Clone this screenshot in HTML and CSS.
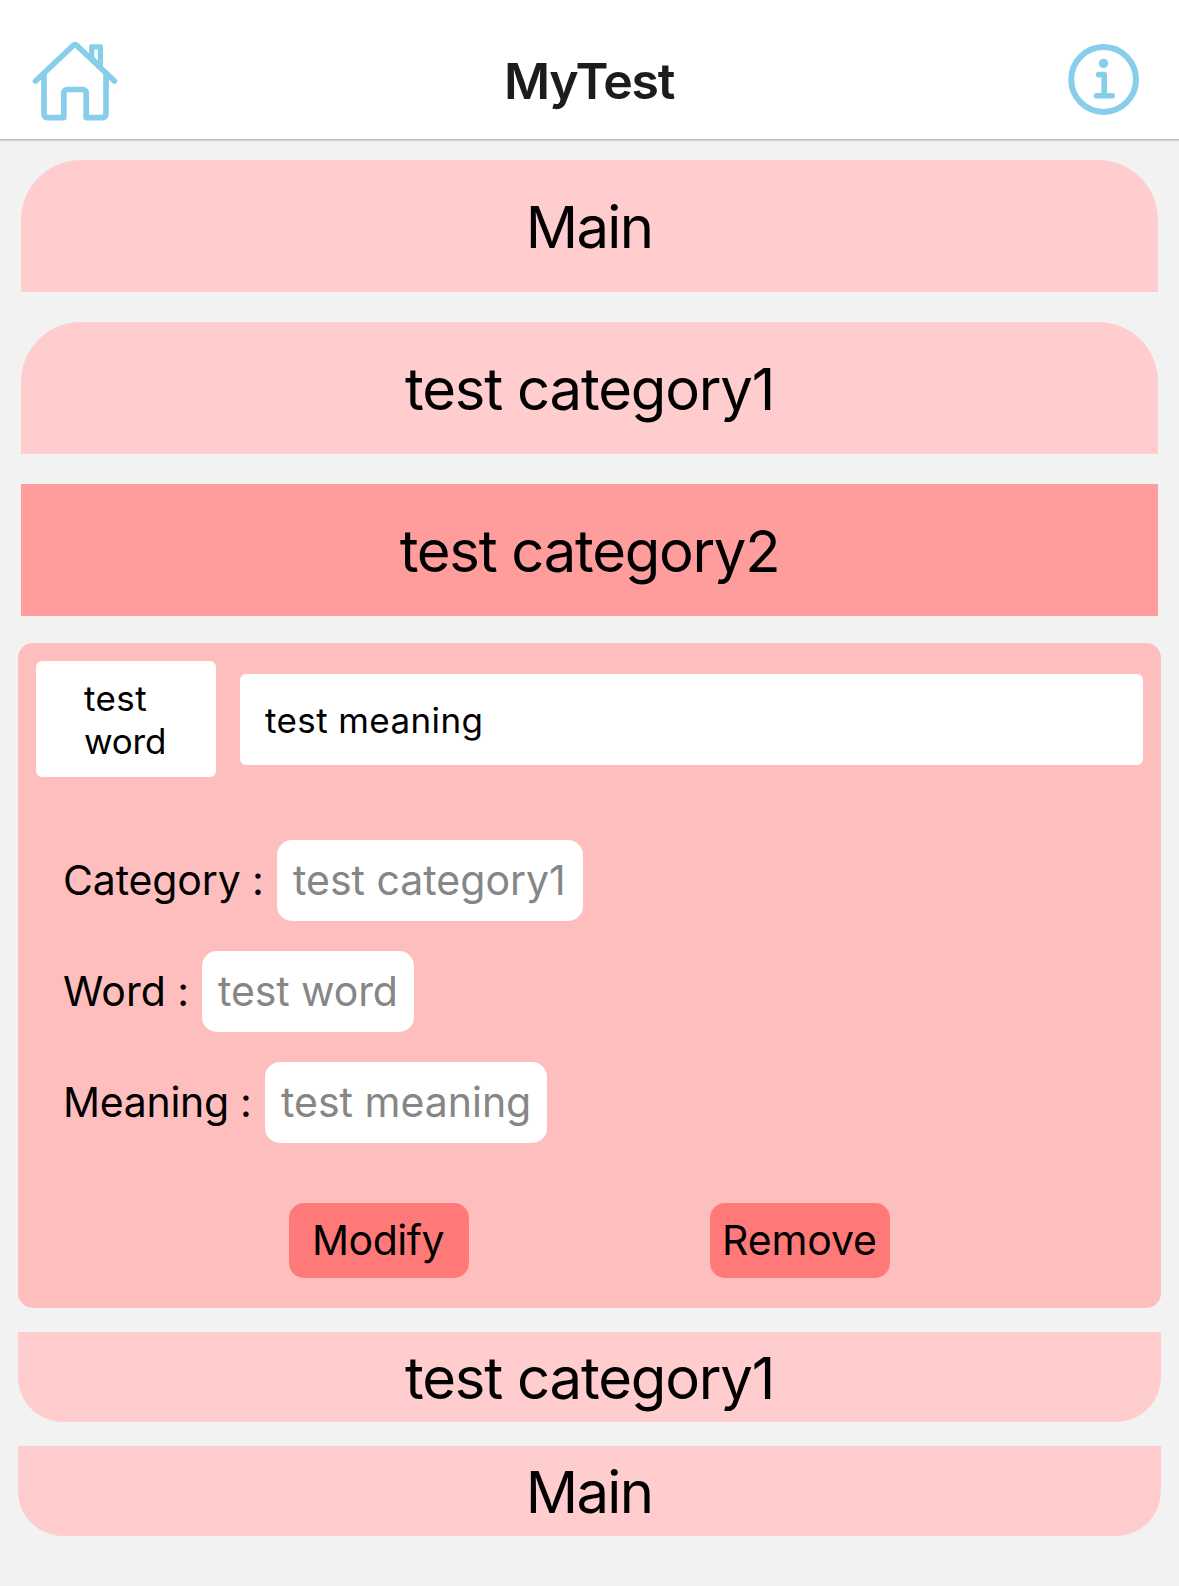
FILE: index.html
```
<!DOCTYPE html>
<html lang="en">
<head>
<meta charset="utf-8">
<title>MyTest</title>
<link rel="stylesheet" href="styles.css">
</head>
<body>
<header class="header">
  <svg class="icon" width="90" height="84" viewBox="30 39 90 84" fill="none" stroke="#87ceeb" stroke-width="5.7" stroke-linecap="round" stroke-linejoin="round">
    <path d="M35.6 81 L72.9 45.8 Q75 43.8 77.1 45.8 L114.4 81"/>
    <path d="M44 75 V113.6 Q44 117.6 48 117.6 H63.8 V93.5 Q63.8 89.5 67.8 89.5 H82.2 Q86.2 89.5 86.2 93.5 V117.6 H102 Q106 117.6 106 113.6 V75"/>
    <path stroke-width="5.2" d="M91.7 58 V46.9 H100.4 V67 Z"/>
  </svg>
  <h1 class="title">MyTest</h1>
  <svg class="icon" width="76" height="84" viewBox="1065 39 76 84" fill="none" stroke="#87ceeb" stroke-width="5.6" stroke-linecap="round" stroke-linejoin="round">
    <circle cx="1103.6" cy="79.5" r="32.4" stroke-width="6"/>
    <circle cx="1103.5" cy="63.4" r="4.7" fill="#87ceeb" stroke="none"/>
    <path d="M1098.7 74.6 H1104.2 V95.8 M1096.5 95.8 H1112.2"/>
  </svg>
</header>
<main class="content">
  <div class="bar bar-open bar-main">Main</div>
  <div class="bar bar-open">test category1</div>
  <div class="bar bar-current">test category2</div>
  <section class="panel">
    <div class="entry">
      <div class="entry-word">test<br><span class="entry-tight">word</span></div>
      <div class="entry-meaning">test meaning</div>
    </div>
    <form class="fields">
      <div class="field"><span class="label label-category">Category :</span><span class="value value-category">test category1</span></div>
      <div class="field"><span class="label label-word">Word :</span><span class="value value-word">test word</span></div>
      <div class="field"><span class="label label-meaning">Meaning :</span><span class="value value-meaning">test meaning</span></div>
    </form>
    <div class="actions">
      <button class="button button-modify" type="button">Modify</button>
      <button class="button" type="button">Remove</button>
    </div>
  </section>
  <div class="bar bar-close">test category1</div>
  <div class="bar bar-close bar-main">Main</div>
</main>
</body>
</html>
```
FILE: styles.css
```
* { box-sizing: border-box; }

body {
  margin: 0;
  min-height: 1586px;
  background: #f2f2f2;
  color: #000;
  font-family: Inter, "Liberation Sans", sans-serif;
}

.header {
  display: flex;
  justify-content: space-between;
  align-items: flex-start;
  height: 139px;
  padding: 39px 38px 0 30px;
  background: #fff;
  box-shadow: 0 1px 0 #bdbdbd, 0 2px 0 #d4d4d4, 0 3px 0 #e8e8e8;
}

.icon { display: block; }

.title {
  margin: 0 0 0 -7px;
  font-size: 50px;
  font-weight: 600;
  line-height: 84px;
  letter-spacing: -1.35px;
  color: #1c1c1e;
}

.content {
  display: flex;
  flex-direction: column;
  padding: 21px 18px 0;
}

.bar {
  display: flex;
  justify-content: center;
  align-items: center;
  padding-top: 2px;
  background: #ffcdce;
  font-size: 58px;
  line-height: 70px;
  letter-spacing: -1.2px;
}

.bar-open {
  height: 132px;
  margin: 0 3px 30px;
  border-radius: 60px 60px 0 0;
}

.bar-current {
  height: 132px;
  margin: 0 3px 27px;
  background: #ff9d9c;
  letter-spacing: -1.3px;
}

.bar-close {
  height: 90px;
  margin-top: 24px;
  border-radius: 0 0 45px 45px;
}

.bar-main {
  padding-right: 1px;
  letter-spacing: -1.7px;
}

.panel {
  height: 665px;
  padding: 18px;
  border-radius: 15px;
  background: #ffbebe;
}

.entry {
  display: flex;
  align-items: center;
  gap: 24px;
  height: 116px;
  font-size: 35px;
  line-height: 43px;
  letter-spacing: 0.4px;
}

.entry-word {
  width: 180px;
  height: 116px;
  padding: 16px 0 0 48px;
  border-radius: 6px;
  background: #fff;
}

.entry-tight { letter-spacing: -0.2px; }

.entry-meaning {
  flex: 1;
  height: 91px;
  padding: 25px 0 0 25px;
  border-radius: 6px;
  background: #fff;
}

.fields {
  display: flex;
  flex-direction: column;
  gap: 30px;
  margin: 63px 0 60px 27px;
}

.field {
  display: flex;
  height: 81px;
  font-size: 41px;
  line-height: 81px;
  white-space: nowrap;
}

.label-category { width: 214px; letter-spacing: -0.15px; }
.label-word { width: 139px; }
.label-meaning { width: 202px; letter-spacing: -0.3px; }

.value {
  padding-left: 16px;
  border-radius: 15px;
  background: #fff;
  color: #868686;
}

.value-category { width: 306px; }
.value-word { width: 212px; letter-spacing: -0.1px; }
.value-meaning { width: 282px; }

.actions {
  display: flex;
  justify-content: space-between;
  padding: 0 253px;
}

.button {
  width: 180px;
  height: 75px;
  padding: 0 1px 0 0;
  border: 0;
  border-radius: 15px;
  background: #ff7979;
  color: #000;
  font: 400 41px/75px Inter, "Liberation Sans", sans-serif;
  letter-spacing: -0.13px;
}

.button-modify {
  padding-right: 2px;
  letter-spacing: -0.45px;
}
```
